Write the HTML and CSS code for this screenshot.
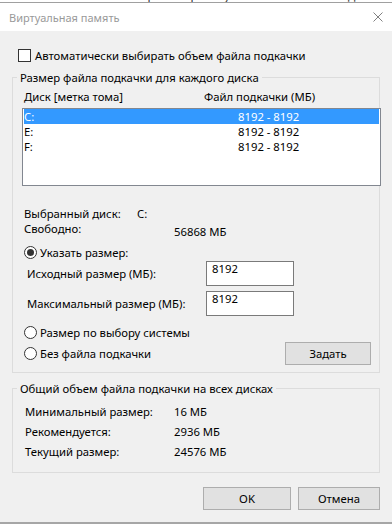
FILE: index.html
```html
<!DOCTYPE html>
<html lang="ru">
<head>
    <meta charset="UTF-8">
    <meta name="viewport" content="width=device-width, initial-scale=1.0">
    <title>Виртуальная память</title>
    <link rel="stylesheet" href="styles.css">
</head>
<body>
    <!-- Edge of the window behind the dialog -->
    <div class="behind"><span>Оптимизировать работу вычислительных задач</span></div>

    <div class="window">
        <div class="titlebar">
            <span class="title">Виртуальная память</span>
            <svg class="close" width="10" height="10" viewBox="0 0 10 10">
                <path d="M0.5 0.5 L9.5 9.5 M9.5 0.5 L0.5 9.5" stroke="#808080" stroke-width="1" fill="none"/>
            </svg>
        </div>

        <div class="content">
            <div class="check-row">
                <span class="checkbox"></span>
                <span>Автоматически выбирать объем файла подкачки</span>
            </div>

            <!-- Per-drive settings -->
            <fieldset class="group group-drives">
                <legend>Размер файла подкачки для каждого диска</legend>
                <div class="group-body">
                    <div class="list-head">
                        <span class="head-drive">Диск [метка тома]</span>
                        <span>Файл подкачки (МБ)</span>
                    </div>
                    <div class="listbox">
                        <div class="list-row selected"><span class="col-drive">C:</span><span>8192 - 8192</span></div>
                        <div class="list-row"><span class="col-drive">E:</span><span>8192 - 8192</span></div>
                        <div class="list-row"><span class="col-drive">F:</span><span>8192 - 8192</span></div>
                    </div>

                    <div class="info-row first">
                        <span class="info-label">Выбранный диск:</span>
                        <span>C:</span>
                    </div>
                    <div class="info-row free">
                        <span class="info-label">Свободно:</span>
                        <span class="info-value">56868 МБ</span>
                    </div>

                    <div class="radio-row custom">
                        <span class="radio checked"></span>
                        <span>Указать размер:</span>
                    </div>
                    <div class="field-row">
                        <span class="field-label">Исходный размер (МБ):</span>
                        <div class="textbox">8192</div>
                    </div>
                    <div class="field-row second">
                        <span class="field-label">Максимальный размер (МБ):</span>
                        <div class="textbox">8192</div>
                    </div>

                    <div class="radio-row system">
                        <span class="radio"></span>
                        <span>Размер по выбору системы</span>
                    </div>
                    <div class="radio-row none">
                        <span class="radio"></span>
                        <span>Без файла подкачки</span>
                        <button class="button set-button">Задать</button>
                    </div>
                </div>
            </fieldset>

            <!-- Totals for all drives -->
            <fieldset class="group group-total">
                <legend>Общий объем файла подкачки на всех дисках</legend>
                <div class="totals">
                    <div class="total-row"><span class="total-label">Минимальный размер:</span><span>16 МБ</span></div>
                    <div class="total-row"><span class="total-label">Рекомендуется:</span><span>2936 МБ</span></div>
                    <div class="total-row"><span class="total-label">Текущий размер:</span><span>24576 МБ</span></div>
                </div>
            </fieldset>

            <div class="dialog-buttons">
                <button class="button ok-button">OK</button>
                <button class="button cancel-button">Отмена</button>
            </div>
        </div>
    </div>
</body>
</html>
```

FILE: styles.css
```css
body {
    margin: 0;
    width: 392px;
    height: 524px;
    overflow: hidden;
    background-color: #f0f0f0;
    font-family: "Noto Sans", sans-serif;
    font-size: 11.3px;
    line-height: 15px;
    color: #000000;
}

.behind {
    height: 2px;
    overflow: hidden;
    background-color: #ffffff;
}

.behind span {
    display: block;
    margin: -11px 0 0 88px;
    line-height: 13px;
    font-size: 12px;
    color: #333333;
}

.window {
    height: 522px;
    box-sizing: border-box;
    border-bottom: 2px solid #a6a6a6;
    display: flex;
    flex-direction: column;
}

.titlebar {
    height: 29px;
    box-sizing: border-box;
    border-top: 1px solid #a0a0a0;
    background-color: #ffffff;
    display: flex;
    align-items: center;
    justify-content: space-between;
    padding: 0 9px 0 9px;
}

.title {
    font-size: 11px;
    color: #999999;
}

.content {
    padding: 0 12px;
    display: flex;
    flex-direction: column;
}

.check-row {
    margin-top: 17px;
    padding-left: 6px;
    display: flex;
    align-items: center;
    gap: 4px;
}

.checkbox {
    width: 13px;
    height: 13px;
    box-sizing: border-box;
    border: 1px solid #333333;
    background-color: #ffffff;
}

.group {
    margin: 7px 0 0;
    padding: 0 0 7px 4px;
    width: 368px;
    box-sizing: border-box;
    border: 1px solid #dcdcdc;
    min-width: 0;
}

.group legend {
    padding: 0 3px;
    line-height: 15px;
}

.group-body {
    padding-left: 7px;
}

.list-head {
    margin-top: 4px;
    display: flex;
}

.head-drive {
    width: 180px;
}

.listbox {
    margin: 4px 0 0 -2px;
    width: 359px;
    height: 78px;
    box-sizing: border-box;
    border: 1px solid #828790;
    background-color: #ffffff;
    padding: 0 1px;
}

.list-row {
    display: flex;
    height: 15px;
}

.list-row.selected {
    background-color: #3399ff;
    color: #ffffff;
}

.col-drive {
    width: 214px;
}

.info-row {
    display: flex;
    align-items: flex-start;
}

.info-row.first {
    margin-top: 20px;
}

.info-label {
    width: 113px;
}

.info-row.free .info-label {
    width: 150px;
}

.info-value {
    margin-top: 3px;
}

.radio-row {
    display: flex;
    align-items: center;
    gap: 3px;
}

.radio-row.custom {
    margin-top: 6px;
}

.radio-row.system {
    margin-top: 9px;
}

.radio-row.none {
    margin-top: 2px;
    height: 23px;
}

.radio {
    width: 13px;
    height: 13px;
    box-sizing: border-box;
    border: 1px solid #333333;
    border-radius: 50%;
    background-color: #ffffff;
    display: flex;
    align-items: center;
    justify-content: center;
}

.radio.checked::after {
    content: "";
    width: 7px;
    height: 7px;
    border-radius: 50%;
    background-color: #333333;
}

.field-row {
    margin-top: 1px;
    padding-left: 3px;
    display: flex;
    align-items: center;
}

.field-row.second {
    margin-top: 5px;
}

.field-label {
    width: 179px;
}

.textbox {
    width: 88px;
    height: 25px;
    box-sizing: border-box;
    border: 1px solid #7a7a7a;
    background-color: #ffffff;
    padding: 1px 5px 0;
    line-height: 12px;
}

.button {
    height: 23px;
    box-sizing: border-box;
    border: 1px solid #adadad;
    background-color: #e1e1e1;
    font-family: inherit;
    font-size: 11.3px;
    color: #000000;
    padding: 0;
}

.set-button {
    width: 86px;
    margin: 0 8px 0 auto;
}

.group-total {
    margin-top: 8px;
    padding-bottom: 13px;
}

.totals {
    padding-left: 8px;
    margin-top: 8px;
    display: flex;
    flex-direction: column;
    gap: 5px;
}

.total-row {
    display: flex;
}

.total-label {
    width: 149px;
}

.dialog-buttons {
    margin-top: 14px;
    display: flex;
    justify-content: flex-end;
    gap: 7px;
}

.ok-button {
    width: 88px;
}

.cancel-button {
    width: 82px;
}
```
